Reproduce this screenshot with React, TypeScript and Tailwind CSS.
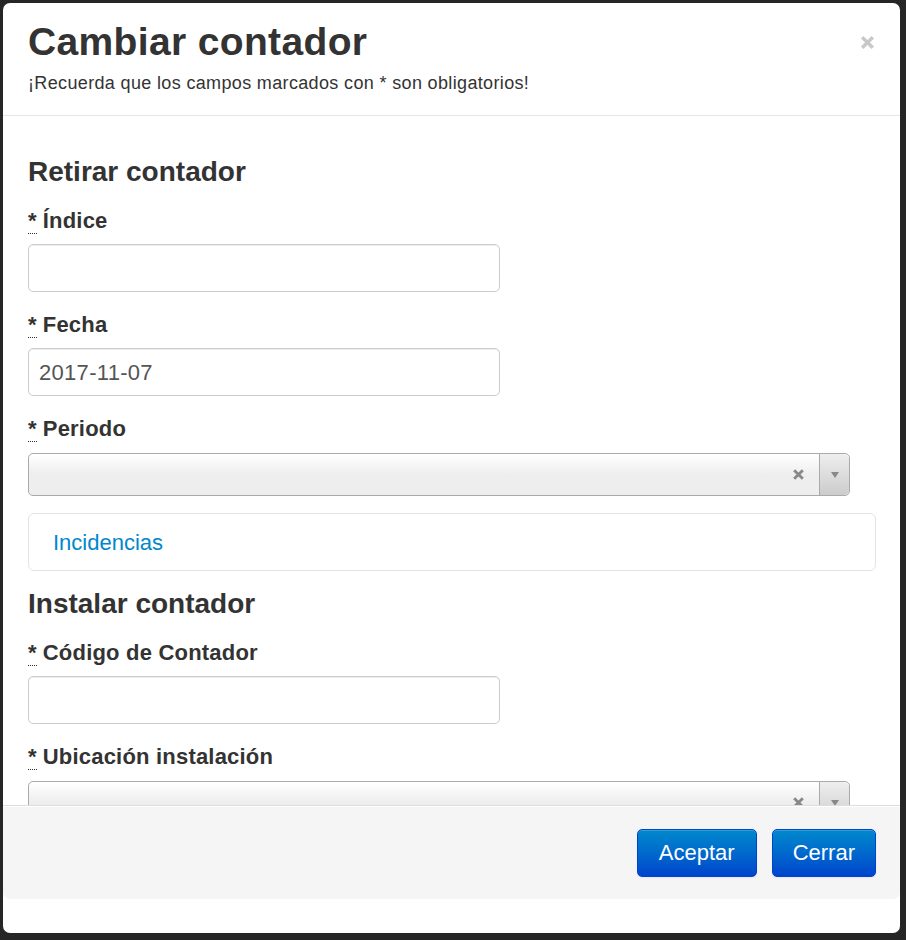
import React from "react";

const font = { fontFamily: '"Liberation Sans", Arial, sans-serif' };

function Req() {
  return (
    <abbr
      title="Obligatorio"
      className="no-underline border-b border-dotted border-[#333] leading-[14px] mr-[6px]"
    >
      *
    </abbr>
  );
}

function Label({ children }: { children: React.ReactNode }) {
  return (
    <label className="block text-[22px] leading-[24px] pt-[1px] -mb-[1px] font-bold tracking-[0.2px] text-[#333]">
      <Req />
      {children}
    </label>
  );
}

function TextInput({ value }: { value?: string }) {
  return (
    <div className="mt-[12px] w-[472px] h-[48px] border border-[#ccc] rounded-[5px] bg-white shadow-[inset_0_1px_1px_rgba(0,0,0,0.075)] flex items-center px-[10px] text-[22px] tracking-[0.3px] text-[#555]">
      {value}
    </div>
  );
}

function Select2() {
  return (
    <div className="mt-[13px] w-[822px] h-[43px] border border-[#aaa] rounded-[5px] bg-gradient-to-b from-white via-[#eeeeee] to-[#eeeeee] flex items-stretch">
      <div className="flex-1 flex items-center justify-end pr-[14px]">
        <svg width="13" height="13" viewBox="0 0 12 12">
          <path d="M2 2 L10 10 M10 2 L2 10" stroke="#888" strokeWidth="2.6" />
        </svg>
      </div>
      <div className="w-[30px] border-l border-[#aaa] flex items-center justify-center bg-gradient-to-b from-[#eeeeee] to-[#cccccc] rounded-r-[5px]">
        <svg width="10" height="8" viewBox="0 0 10 8">
          <path d="M1 1 L9 1 L5 7 Z" fill="#888" />
        </svg>
      </div>
    </div>
  );
}

export default function App() {
  return (
    <div className="w-[906px] h-[940px] bg-[#262626] pt-[3px] pl-[3px] pr-[6px] pb-[7px]" style={font}>
      <div className="w-[897px] h-[930px] bg-white rounded-[7px] flex flex-col overflow-hidden">
        {/* Header */}
        <div className="relative px-[25px] pt-[19px] pb-[21px] border-b border-[#e5e5e5]">
          <h1 className="text-[39px] leading-[40px] font-bold tracking-[0.35px] text-[#333]">Cambiar contador</h1>
          <p className="mt-[10px] text-[18px] leading-[22px] tracking-[0.35px] text-[#333]">
            ¡Recuerda que los campos marcados con * son obligatorios!
          </p>
          <button className="absolute right-[24px] top-[31px] text-[#c8c8c8]">
            <svg width="17" height="17" viewBox="0 0 16 16">
              <path d="M3 3 L13 13 M13 3 L3 13" stroke="currentColor" strokeWidth="3.2" />
            </svg>
          </button>
        </div>

        {/* Body */}
        <div className="h-[689px] overflow-hidden px-[25px] pt-[41px]">
          <h3 className="text-[28px] leading-[30px] font-bold text-[#333]">Retirar contador</h3>
          <div className="mt-[21px]">
            <Label>Índice</Label>
            <TextInput />
          </div>
          <div className="mt-[20px]">
            <Label>Fecha</Label>
            <TextInput value="2017-11-07" />
          </div>
          <div className="mt-[20px]">
            <Label>Periodo</Label>
            <Select2 />
          </div>
          <div className="mt-[17px] w-[848px] h-[58px] border border-[#e3e3e3] rounded-[6px] flex items-center px-[24px]">
            <a className="text-[22px] text-[#0088cc]">Incidencias</a>
          </div>
          <h3 className="mt-[18px] text-[28px] leading-[30px] font-bold text-[#333]">Instalar contador</h3>
          <div className="mt-[21px]">
            <Label>Código de Contador</Label>
            <TextInput />
          </div>
          <div className="mt-[20px]">
            <Label>Ubicación instalación</Label>
            <Select2 />
          </div>
        </div>

        {/* Footer */}
        <div className="h-[94px] bg-[#f5f5f5] border-t border-[#ddd] rounded-b-[7px] shadow-[inset_0_1px_0_#fff] flex items-center justify-end gap-[15px] pr-[24px]">
          <button className="h-[48px] px-[21px] rounded-[5px] text-[22px] text-white bg-gradient-to-b from-[#0088cc] to-[#0044cc] border border-[#0044cc] shadow-[inset_0_1px_0_rgba(255,255,255,0.2),0_1px_2px_rgba(0,0,0,0.05)]">
            Aceptar
          </button>
          <button className="h-[48px] px-[20px] rounded-[5px] text-[22px] text-white bg-gradient-to-b from-[#0088cc] to-[#0044cc] border border-[#0044cc] shadow-[inset_0_1px_0_rgba(255,255,255,0.2),0_1px_2px_rgba(0,0,0,0.05)]">
            Cerrar
          </button>
        </div>
        <div className="flex-1" />
      </div>
    </div>
  );
}
